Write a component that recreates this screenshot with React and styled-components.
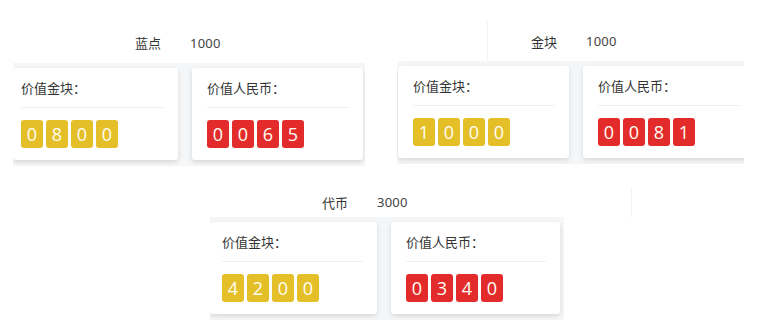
import React from 'react'
import styled, { createGlobalStyle } from 'styled-components'

const GlobalStyle = createGlobalStyle`
  html, body {
    margin: 0;
    padding: 0;
    background: #fff;
  }
  body {
    font-family: "Noto Sans", "Noto Sans CJK SC", sans-serif;
    color: #333;
    width: 767px;
    height: 331px;
    overflow: hidden;
  }
`

const Page = styled.div`
  display: flex;
  flex-direction: column;
  padding-top: 22px;
`

const Row = styled.div`
  display: flex;
  align-items: flex-start;
  padding-left: ${p => p.$left}px;
  gap: ${p => p.$gap || 0}px;
  margin-top: ${p => p.$top || 0}px;
`

const Group = styled.div`
  display: flex;
  flex-direction: column;
  width: ${p => p.$width}px;
  margin-top: ${p => p.$shift || 0}px;
`

const Header = styled.div`
  display: flex;
  align-items: center;
  height: ${p => p.$height}px;
  padding-left: ${p => p.$indent}px;
  font-size: 13px;
  position: relative;
`

const HeaderRule = styled.span`
  position: absolute;
  top: ${p => p.$top}px;
  bottom: 0;
  left: ${p => p.$x}px;
  width: 1px;
  background: #f2f2f4;
`

const Label = styled.span`
  width: 55px;
  color: #333;
`

const Value = styled.span`
  color: #444;
  letter-spacing: 0.2px;
`

const Panel = styled.div`
  display: flex;
  gap: 14px;
  padding: 5px 2px 6px ${p => p.$padLeft || 0}px;
  background: #f5f6f8;
  overflow: hidden;
`

const Card = styled.div`
  flex: none;
  width: ${p => p.$width || 171}px;
  box-sizing: border-box;
  padding: 12px 14px 12px ${p => p.$padLeft || 15}px;
  background: #fff;
  border-radius: 3px;
  box-shadow: 0 2px 5px rgba(0, 0, 0, 0.13);
`

const Title = styled.div`
  font-size: 13px;
  line-height: 16px;
  color: #333;
  padding-bottom: 11px;
  border-bottom: 1px solid #f0f0f2;
`

const Digits = styled.div`
  display: flex;
  gap: 3px;
  margin-top: 12px;
`

const Tile = styled.span`
  width: 22px;
  height: 28px;
  border-radius: 3px;
  display: flex;
  align-items: center;
  justify-content: center;
  background: ${p => (p.$tone === 'gold' ? '#e5bf28' : '#e42b2b')};
  color: #fffdf3;
  font-family: "Open Sans", sans-serif;
  font-size: 18px;
  line-height: 1;
`

const Counter = ({ title, value, tone, width, padLeft }) => (
  <Card $width={width} $padLeft={padLeft}>
    <Title>{title}</Title>
    <Digits>
      {value.split('').map((d, i) => (
        <Tile key={i} $tone={tone}>{d}</Tile>
      ))}
    </Digits>
  </Card>
)

const Asset = ({ name, amount, gold, rmb, width, indent, headHeight, shift, rule, first, second }) => (
  <Group $width={width} $shift={shift}>
    <Header $height={headHeight} $indent={indent}>
      {rule && <HeaderRule $x={rule.x} $top={rule.top} />}
      <Label>{name}</Label>
      <Value>{amount}</Value>
    </Header>
    <Panel $padLeft={first.panelPad}>
      <Counter title="价值金块：" value={gold} tone="gold" {...first} />
      <Counter title="价值人民币：" value={rmb} tone="red" {...second} />
    </Panel>
  </Group>
)

export default function App() {
  return (
    <>
      <GlobalStyle />
      <Page>
        <Row $left={13} $gap={32}>
          <Asset
            name="蓝点"
            amount="1000"
            gold="0800"
            rmb="0065"
            width={352}
            indent={122}
            headHeight={41}
            first={{ width: 165, padLeft: 8, panelPad: 0 }}
            second={{}}
          />
          <Asset
            name="金块"
            amount="1000"
            gold="1000"
            rmb="0081"
            width={347}
            indent={134}
            headHeight={40}
            shift={-1}
            rule={{ x: 90, top: 0 }}
            first={{ panelPad: 1 }}
            second={{}}
          />
        </Row>
        <Row $left={210} $top={21}>
          <Asset
            name="代币"
            amount="3000"
            gold="4200"
            rmb="0340"
            width={354}
            indent={112}
            headHeight={30}
            rule={{ x: 421, top: 0 }}
            first={{ width: 167, padLeft: 12, panelPad: 0 }}
            second={{ width: 169 }}
          />
        </Row>
      </Page>
    </>
  )
}
